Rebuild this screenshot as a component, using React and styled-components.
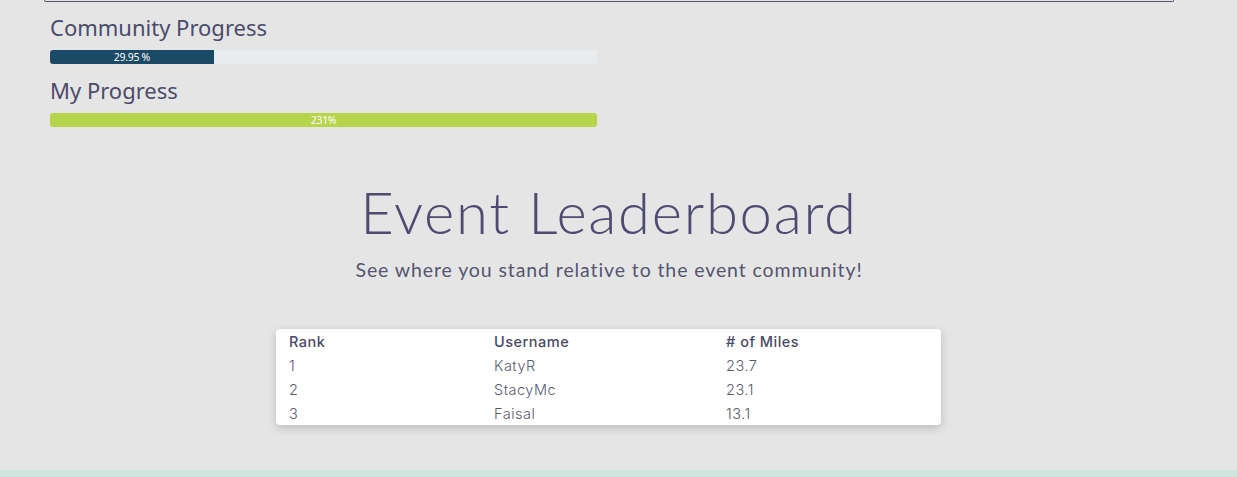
import React from "react";
import styled, { createGlobalStyle } from "styled-components";

const Global = createGlobalStyle`
  html, body { margin: 0; padding: 0; background: #e5e5e5; }
  body { font-family: "Lato", "Open Sans", sans-serif; overflow: hidden; }
`;

const Page = styled.div`
  width: 1237px;
  height: 477px;
  display: flex;
  flex-direction: column;
  background: #e5e5e5;
`;

const Container = styled.div`
  width: 1130px;
  margin-left: 44px;
  flex: 1;
  display: flex;
  flex-direction: column;
`;

const TopCard = styled.div`
  height: 1px;
  border: 1px solid #55556a;
  border-top: none;
  border-radius: 0 0 6px 6px;
  background: #e5e5e5;
`;

const ProgressSection = styled.section`
  padding: 11px 0 0 6px;
  width: 547px;
  display: flex;
  flex-direction: column;
`;

const ProgressLabel = styled.h3`
  margin: 0;
  font-family: "Noto Sans", "Open Sans", sans-serif;
  font-weight: 400;
  font-size: 22px;
  line-height: 28px;
  color: #4b4b6b;
  margin-bottom: ${(p) => p.$gap}px;
`;

const Track = styled.div`
  height: 14px;
  border-radius: 3px;
  background: #e9ecef;
  overflow: hidden;
  display: flex;
  margin-bottom: ${(p) => p.$gap}px;
`;

const Fill = styled.div`
  height: 100%;
  background: ${(p) => p.$color};
  color: #fff;
  font-family: "Noto Sans", "Open Sans", sans-serif;
  font-size: 10.5px;
  line-height: 14px;
  text-align: center;
  letter-spacing: -0.3px;
`;

const Hero = styled.header`
  margin-top: 53px;
  display: flex;
  flex-direction: column;
  align-items: center;
`;

const Title = styled.h1`
  margin: 0;
  font-family: "Lato", sans-serif;
  font-weight: 300;
  font-size: 58px;
  line-height: 64px;
  letter-spacing: 1.7px;
  color: #4d4c70;
`;

const Subtitle = styled.p`
  margin: 14px 0 0;
  font-family: "Lato", sans-serif;
  font-weight: 400;
  font-size: 19.5px;
  line-height: 24px;
  letter-spacing: 0.9px;
  color: #55556f;
`;

const TableCard = styled.div`
  align-self: center;
  width: 665px;
  margin: 47px 1px 0 0;
  background: #fff;
  border-radius: 4px;
  box-shadow: 0 3px 10px rgba(0, 0, 0, 0.18);
  padding: 0 13px;
  box-sizing: border-box;
`;

const Row = styled.div`
  display: grid;
  grid-template-columns: 205px 232px 1fr;
  height: 24px;
  align-items: center;
  font-family: "Inter", "Lato", sans-serif;
  font-size: 14.5px;
  letter-spacing: 0.5px;
  font-weight: ${(p) => (p.$head ? 500 : 300)};
  color: ${(p) => (p.$head ? "#4a4a68" : "#5a5a70")};
`;

const Cell = styled.span`
  color: ${(p) => p.$color || "inherit"};
`;

const Footer = styled.div`
  height: 7px;
  background: #cfe6df;
`;

const rows = [
  { rank: "1", name: "KatyR", miles: "23.7" },
  { rank: "2", name: "StacyMc", miles: "23.1" },
  { rank: "3", name: "Faisal", miles: "13.1" },
];

export default function App() {
  return (
    <Page>
      <Global />
      <Container>
        <TopCard />
        <ProgressSection>
          <ProgressLabel $gap={9}>Community Progress</ProgressLabel>
          <Track $gap={12}>
            <Fill $color="#1b4a66" style={{ width: "29.95%" }}>29.95 %</Fill>
          </Track>
          <ProgressLabel $gap={9}>My Progress</ProgressLabel>
          <Track $gap={0}>
            <Fill $color="#b6d54a" style={{ width: "100%" }}>231%</Fill>
          </Track>
        </ProgressSection>
        <Hero>
          <Title>Event Leaderboard</Title>
          <Subtitle>See where you stand relative to the event community!</Subtitle>
        </Hero>
        <TableCard>
          <Row $head>
            <Cell>Rank</Cell>
            <Cell>Username</Cell>
            <Cell># of Miles</Cell>
          </Row>
          {rows.map((r) => (
            <Row key={r.rank}>
              <Cell $color={r.rank === "1" ? "#6a4a80" : undefined}>{r.rank}</Cell>
              <Cell>{r.name}</Cell>
              <Cell>{r.miles}</Cell>
            </Row>
          ))}
        </TableCard>
      </Container>
      <Footer />
    </Page>
  );
}
